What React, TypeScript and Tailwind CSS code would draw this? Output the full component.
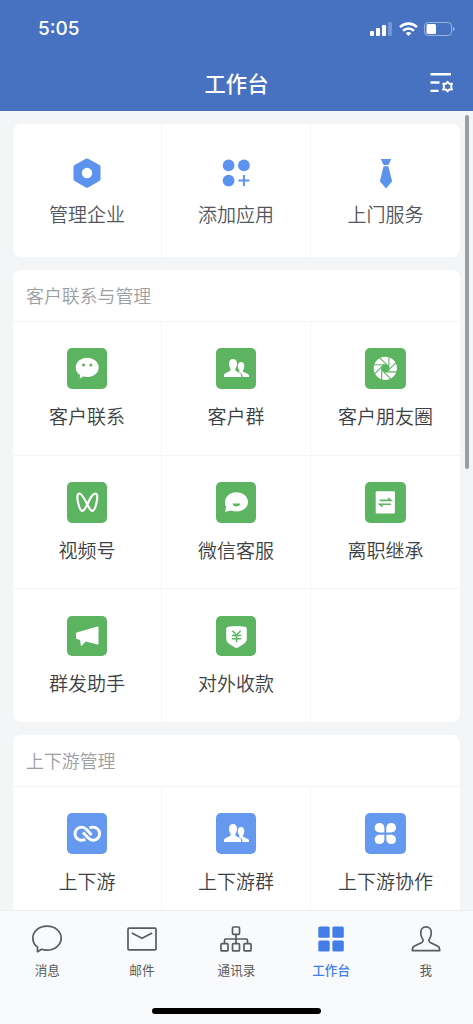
import type { ReactNode } from "react";
import clsx from "clsx";

type App = {
  label: string;
  icon: ReactNode;
};

const ManageIcon = () => (
  <svg viewBox="0 0 40 40" className="size-full">
    <path
      d="M18.9 5.8a2.2 2.2 0 0 1 2.2 0l11.300 6.300a2.200 2.200 0 0 1 1.100 1.900v12a2.200 2.200 0 0 1-1.100 1.900l-11.300 6.500a2.200 2.200 0 0 1-2.200 0L7.600 27.900A2.200 2.200 0 0 1 6.500 26V14a2.200 2.200 0 0 1 1.100-1.900zM20 14.800a5.200 5.200 0 1 0 0 10.400a5.200 5.200 0 0 0 0-10.400z"
      fill="#5c93ee"
      fillRule="evenodd"
    />
  </svg>
);

const AddIcon = () => (
  <svg viewBox="0 0 40 40" className="size-full">
    <g fill="#5c93ee">
      <circle cx="12.600" cy="12.400" r="5.900" />
      <circle cx="27.900" cy="12.400" r="5.900" />
      <circle cx="12.600" cy="27.600" r="5.900" />
    </g>
    <path d="M27.900 22.100v11M22.400 27.600h11" stroke="#5c93ee" strokeWidth="2" />
  </svg>
);

const TieIcon = () => (
  <svg viewBox="0 0 40 40" className="size-full">
    <path
      d="M14.800 6h10.400l-2.200 5a1.500 1.500 0 0 1-1.200.9h-3.600a1.500 1.500 0 0 1-1.200-.9zM17.600 13.200h4.800l3.700 15L20 35.400l-6.100-7.200z"
      fill="#5c93ee"
    />
  </svg>
);

const ChatIcon = () => (
  <>
    <path d="M20.200 9.700c6.400 0 11.500 4.300 11.500 9.700s-5.100 9.600-11.500 9.600c-1.400 0-2.800-.2-4-.5L12.700 30.400l.4-3.300c-2.700-1.700-4.400-4.500-4.400-7.700 0-5.400 5.100-9.700 11.500-9.700z" />
    <circle cx="16.500" cy="17.100" r="1.500" fill="#5cb360" />
    <circle cx="23.800" cy="17.100" r="1.500" fill="#5cb360" />
  </>
);

const GroupIcon = () => (
  <>
    <path d="M17 11c2.500 0 4 1.900 4 4.600 0 1.800-.5 3.700-1.400 4.900-.5.8-.4 2 .5 2.500l3.500 1.900c1.200.6 1.500 1.300 1.500 2.600v1.500H8v-1.500c0-1.300.6-2 1.800-2.500l4-1.900c1-.5 1.100-1.800.5-2.600-.8-1.200-1.300-3.100-1.300-4.900 0-2.700 1.500-4.600 4-4.600z" />
    <path d="M25 14c2 0 3.300 1.600 3.300 4 0 1.500-.4 3-1.100 4-.5.800-.3 1.600.5 2l3.800 1.800c1 .5 1.500 1.200 1.500 2.200v1h-6.500c0-2.400-.6-3.300-2.400-4.200l-1.500-.9c.9-.5 1-1.200.5-2-.8-1-1.300-2.400-1.300-3.900 0-2.400 1.300-4 3.200-4z" />
  </>
);

const MomentsIcon = () => (
  <>
    <circle cx="20.300" cy="20.300" r="11.600" />
    <g transform="translate(20.300 20.300)">
      <path
        d="M3.600-1.500v3L1.500 3.600h-3L-3.600 1.500v-3L-1.500-3.600h3z"
        fill="#5cb360"
      />
      {[0, 45, 90, 135, 180, 225, 270, 315].map((deg) => (
        <path
          key={deg}
          d="M3.600 1.500V-12"
          stroke="#5cb360"
          strokeWidth="1.100"
          transform={`rotate(${deg})`}
        />
      ))}
    </g>
  </>
);

const ChannelsIcon = () => (
  <path
    d="M20.300 22.300C17.500 17 15 11.500 12.300 11.500c-2.300 0-2.300 4-1.400 8.300.9 4.500 2 9 4.400 9 2 0 3.300-2.800 5-6.500 2.800-5.800 5.200-10.800 8-10.800 2.300 0 2.300 4 1.400 8.300-.9 4.500-2 9-4.400 9-2 0-3.300-2.800-5-6.500z"
    fill="none"
    stroke="#fff"
    strokeWidth="2.200"
  />
);

const ServiceIcon = () => (
  <>
    <path d="M20.500 10.200C27 10.200 32 14.500 32 19.900s-5 9.700-11.500 9.700c-1.900 0-3.700-.4-5.200-1l-5.600 1.200c-.4.100-.6-.2-.5-.6l.9-4.400C9.300 23.300 9 21.700 9 19.900c0-5.400 5-9.700 11.500-9.700z" />
    <path d="M16.500 21.600h7.800c-.4 1.800-1.900 2.900-3.900 2.900s-3.500-1.100-3.900-2.900z" fill="#5cba5a" />
  </>
);

const TransferIcon = () => (
  <>
    <rect x="10.700" y="9.200" width="19.200" height="22.300" rx="1" />
    <path
      d="M14.700 18.400h11.200l-2.800-2.400M25.900 22.200H14.700l2.800 2.400"
      fill="none"
      stroke="#5cb360"
      strokeWidth="1.600"
    />
  </>
);

const MegaphoneIcon = () => (
  <path d="M9.700 16.600 30.500 10.600q1 0 1 1v15.900q0 1-1 .9l-11.800-3L14.600 29.700q-.7.500-.8-.3L13.100 24l-3.400-1q-.7-.3-.7-1v-4.500q0-.7.700-.9z" />
);

const ShieldIcon = () => (
  <>
    <path d="M12 10.800c5-1.100 11.800-1.100 17 0q1.800.4 1.800 2v9.500c0 3-1.100 4.300-3.500 5.900l-5.200 3.300q-1.600.9-3.200 0l-5.200-3.300c-2.400-1.600-3.500-2.900-3.500-5.900v-9.500q0-1.600 1.800-2z" />
    <path
      d="M16.400 14.700 20.500 19.300 24.600 14.700M15.800 19.500h9.400M15.800 22.700h9.400M20.500 19v7.200"
      fill="none"
      stroke="#5cb360"
      strokeWidth="1.400"
    />
  </>
);

const LinkIcon = () => (
  <g fill="none" stroke="#fff" strokeWidth="2.900">
    <path d="M18.300 26.300C17.100 27 15.800 27.300 14.600 27.300a6.600 6.600 0 1 1 0-13.200c2 0 3.600 1 5 2.500l5 5.300" />
    <path d="M22.400 15.100C23.600 14.400 24.800 14.100 26 14.100a6.600 6.600 0 1 1 0 13.200c-2 0-3.600-1-5-2.500l-5-5.300" />
  </g>
);

const CloverIcon = () => (
  <path d="M14.500 10c3 0 4.900 2 4.900 4.900v4.500h-4.500C11.900 19.400 9.700 17.500 9.700 14.700S11.700 10 14.500 10zM26.200 10c-3 0-4.900 2-4.900 4.900v4.500h4.500c3 0 5.200-1.900 5.200-4.700S29 10 26.200 10zM14.500 31.100c3 0 4.900-2 4.900-4.900v-4.500h-4.500c-3 0-5.200 1.900-5.200 4.700s2 4.700 4.800 4.700zM26.200 31.100c-3 0-4.900-2-4.900-4.900v-4.500h4.500c3 0 5.200 1.900 5.200 4.700s-2 4.700-4.800 4.700z" />
);

const quickApps: App[] = [
  { label: "管理企业", icon: <ManageIcon /> },
  { label: "添加应用", icon: <AddIcon /> },
  { label: "上门服务", icon: <TieIcon /> },
];

const customerApps: App[] = [
  { label: "客户联系", icon: <ChatIcon /> },
  { label: "客户群", icon: <GroupIcon /> },
  { label: "客户朋友圈", icon: <MomentsIcon /> },
  { label: "视频号", icon: <ChannelsIcon /> },
  { label: "微信客服", icon: <ServiceIcon /> },
  { label: "离职继承", icon: <TransferIcon /> },
  { label: "群发助手", icon: <MegaphoneIcon /> },
  { label: "对外收款", icon: <ShieldIcon /> },
];

const streamApps: App[] = [
  { label: "上下游", icon: <LinkIcon /> },
  { label: "上下游群", icon: <GroupIcon /> },
  { label: "上下游协作", icon: <CloverIcon /> },
];

const tabs: App[] = [
  {
    label: "消息",
    icon: (
      <path d="M17 4.200c8 0 14.200 5.100 14.200 11.800S25 28.100 17 28.100c-1.900 0-3.800-.3-5.400-.8L7.500 29.700v-4.600C4.600 23 2.800 19.700 2.800 16 2.800 9.300 9 4.200 17 4.200z" />
    ),
  },
  {
    label: "邮件",
    icon: (
      <>
        <rect x="3" y="6.200" width="28" height="21.600" rx="1" />
        <path d="m6.800 11 10.200 5.300L27.200 11" />
      </>
    ),
  },
  {
    label: "通讯录",
    icon: (
      <>
        <rect x="13.500" y="5" width="7" height="7.300" rx="1" />
        <rect x="2" y="21.600" width="7" height="7.300" rx="1" />
        <rect x="13.500" y="21.600" width="7" height="7.300" rx="1" />
        <rect x="25" y="21.600" width="7" height="7.300" rx="1" />
        <path d="M17 12.300v9.300M5.500 21.600v-3.400q0-1.200 1.200-1.200h20.600q1.200 0 1.200 1.200v3.400" />
      </>
    ),
  },
  {
    label: "工作台",
    icon: (
      <g fill="#437ee8" stroke="none">
        <rect x="4.300" y="4.500" width="11.400" height="11.200" rx="1.500" />
        <rect x="18.400" y="4.500" width="11.400" height="11.200" rx="1.500" />
        <rect x="4.300" y="18.400" width="11.400" height="11.200" rx="1.500" />
        <rect x="18.400" y="18.400" width="11.400" height="11.200" rx="1.500" />
      </g>
    ),
  },
  {
    label: "我",
    icon: (
      <path d="M17 4.900c3.300 0 5.300 2.500 5.300 5.800 0 2.300-.7 4.500-1.900 6.200-1 1.500-.6 2.700.8 3.500l7.700 3.900c1.300.7 1.700 1.600 1.700 2.900v1.500H3.400v-1.500c0-1.300.4-2.200 1.700-2.900l7.700-3.900c1.400-.8 1.800-2 .8-3.500-1.200-1.700-1.900-3.900-1.900-6.200 0-3.300 2-5.800 5.300-5.800z" />
    ),
  },
];

const Section = ({
  title,
  apps,
  tile,
}: {
  title: string;
  apps: App[];
  tile: string;
}) => (
  <section className="shrink-0 overflow-hidden rounded-lg bg-white">
    <h2 className="h-[52px] border-b border-[#f3f3f4] pl-[13px] text-[17.900px] leading-[50px] font-[350] text-[#9b9ea2]">
      {title}
    </h2>
    <div className="-mb-px grid grid-cols-3">
      {apps.map(({ label, icon }) => (
        <div
          key={label}
          className="flex h-[133.700px] flex-col items-center border-r border-b border-[#f5f5f6] pt-[26.500px] nth-[3n]:border-r-0"
        >
          <div className={clsx("size-[40.600px] rounded-[5px]", tile)}>
            <svg viewBox="0 0 40.6 40.6" className="size-full" fill="#fff">
              {icon}
            </svg>
          </div>
          <span className="mt-[13px] text-[19px] leading-7 font-[350] whitespace-nowrap text-[#3c3f45]">
            {label}
          </span>
        </div>
      ))}
    </div>
  </section>
);

const Header = () => (
  <header className="h-[111px] shrink-0 bg-[#4772c1] text-white">
    <div className="flex h-[58px] items-center justify-between pr-[18px] pl-[38px]">
      <span className="pt-px font-['Inter',sans-serif] text-[19px] font-medium">
        5:05
      </span>
      <div className="flex items-center gap-[6.500px]">
        <svg viewBox="0 0 22 14" className="h-3.5 w-[22px]" fill="#fff">
          <rect x="0" y="9" width="4" height="5" rx="1" />
          <rect x="6" y="6" width="4" height="8" rx="1" />
          <rect x="12" y="3" width="4" height="11" rx="1" />
          <rect x="18" y="0" width="4" height="14" rx="1" opacity=".25" />
        </svg>
        <svg viewBox="0 0 19 14" className="h-3.5 w-[19px]">
          <g fill="none" stroke="#fff" strokeWidth="2.600">
            <path d="M1 5.100a12.200 12.200 0 0 1 17 0" />
            <path d="M4.100 8.700a7.700 7.700 0 0 1 10.800 0" />
          </g>
          <path d="M6.700 11.300a4 4 0 0 1 5.600 0L9.500 14z" fill="#fff" />
        </svg>
        <svg viewBox="0 0 31 14" className="h-3.5 w-[31px]">
          <rect
            x=".5"
            y=".5"
            width="27"
            height="13"
            rx="3.500"
            fill="none"
            stroke="#fff"
            strokeOpacity=".45"
          />
          <rect x="2.500" y="2" width="9.500" height="10" rx="1.500" fill="#fff" />
          <path d="M29 4.800q1.700.7 1.700 2.200T29 9.200z" fill="#fff" opacity=".5" />
        </svg>
      </div>
    </div>
    <div className="grid h-[50px] grid-cols-3 items-center px-[19px]">
      <h1 className="col-start-2 text-center text-[21.300px] font-medium">
        工作台
      </h1>
      <svg viewBox="0 0 24 22" className="h-[22px] w-6 justify-self-end">
        <path
          d="M.5 2.300H21M.5 10.500h9M.5 18.900h8"
          fill="none"
          stroke="#fff"
          strokeWidth="2.400"
        />
        <path
          d="m17.600 9.800 1.500 1.900 2.900-.1-.9 3 .9 3-2.900-.1-1.500 1.900-1.500-1.900-2.900.1.900-3-.9-3 2.900.1z"
          fill="none"
          stroke="#fff"
          strokeWidth="1.900"
          strokeLinejoin="round"
        />
      </svg>
    </div>
  </header>
);

const TabBar = () => (
  <nav className="flex h-[114px] shrink-0 flex-col items-center border-t border-[#ebecee] bg-[#f9fafb]">
    <div className="grid w-full grid-cols-5 pt-[10.500px]">
      {tabs.map(({ label, icon }) => (
        <div key={label} className="flex flex-col items-center">
          <svg
            viewBox="0 0 34 34"
            className="size-[34px]"
            fill="none"
            stroke="#585b60"
            strokeWidth="1.700"
            strokeLinejoin="round"
          >
            {icon}
          </svg>
          <span
            className={clsx(
              "mt-1 text-[12.600px] leading-5",
              label === "工作台" ? "font-medium text-[#437ee8]" : "text-[#585b60]"
            )}
          >
            {label}
          </span>
        </div>
      ))}
    </div>
    <div className="mt-auto mb-[10px] h-[6px] w-[169px] rounded-full bg-black" />
  </nav>
);

const App = () => {
  return (
    <div className="flex h-[1024px] w-[473px] flex-col overflow-hidden font-['Noto_Sans_CJK_SC',sans-serif]">
      <Header />
      <main className="relative flex min-h-0 flex-1 flex-col gap-[12.700px] overflow-hidden bg-[#f4f5f7] px-[13px] pt-[12.500px]">
        <section className="grid shrink-0 grid-cols-3 overflow-hidden rounded-lg bg-white">
          {quickApps.map(({ label, icon }) => (
            <div
              key={label}
              className="flex h-[133.700px] flex-col items-center border-r border-[#f5f5f6] pt-[29.500px] last:border-r-0"
            >
              <div className="size-10">{icon}</div>
              <span className="mt-[6.500px] text-[19px] leading-7 font-[350] text-[#53565c]">
                {label}
              </span>
            </div>
          ))}
        </section>
        <Section title="客户联系与管理" apps={customerApps} tile="bg-[#5cb360]" />
        <Section title="上下游管理" apps={streamApps} tile="bg-[#6599ef]" />
        <div className="absolute top-1 right-1 h-[354px] w-1 rounded-full bg-[#9c9d9f]" />
      </main>
      <TabBar />
    </div>
  );
};

export default App;
